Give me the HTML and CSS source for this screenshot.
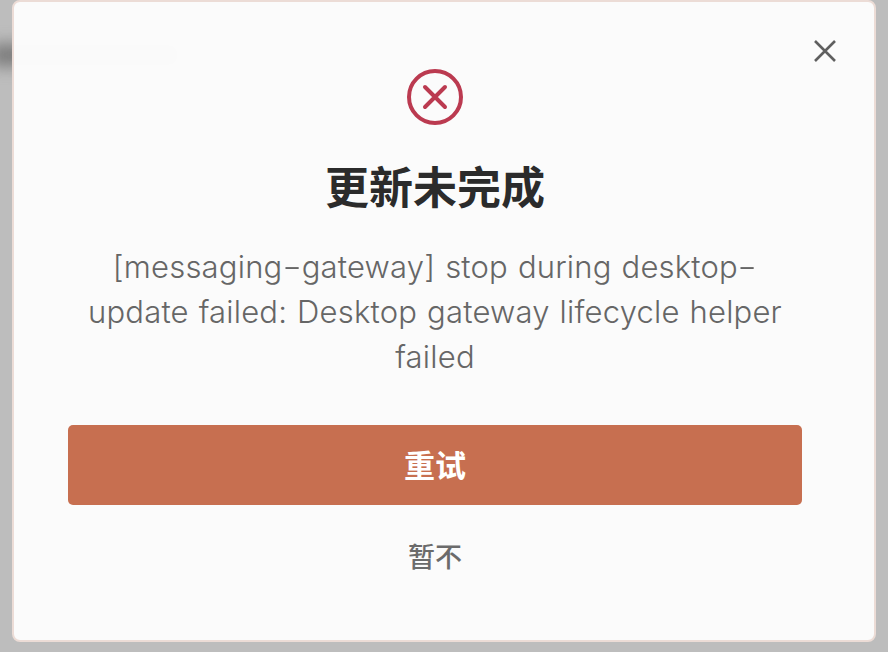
FILE: index.html
```html
<!DOCTYPE html>
<html lang="zh">
<head>
<meta charset="utf-8">
<title>更新未完成</title>
<link rel="stylesheet" href="styles.css">
</head>
<body>
<div class="backdrop">
  <div class="smudge"></div>
  <div class="dialog">
    <button class="close" aria-label="关闭">
      <svg viewBox="0 0 24 24" width="24" height="24"><path d="M2 2 22 22M22 2 2 22"/></svg>
    </button>
    <svg class="status" viewBox="0 0 56 56" width="56" height="56"><circle cx="28" cy="28" r="26"/><path d="M18 18 38 38M38 18 18 38"/></svg>
    <h1 class="title">更新未完成</h1>
    <p class="message">[messaging<span class="hy">-</span>gateway] stop during desktop<span class="hy">-</span>update failed: Desktop gateway lifecycle helper failed</p>
    <button class="retry">重试</button>
    <button class="later">暂不</button>
  </div>
</div>
</body>
</html>
```
FILE: styles.css
```css
* { box-sizing: border-box; }
html, body { margin: 0; height: 100%; }
body { font-family: "Inter", "Noto Sans CJK SC", sans-serif; overflow: hidden; }
.backdrop {
  position: relative;
  width: 888px;
  height: 652px;
  background: #bdbdbd;
  padding: 0 12px;
  overflow: hidden;
}
.smudge {
  position: absolute;
  left: -10px;
  top: 44px;
  width: 190px;
  height: 22px;
  background: #7a7a7a;
  filter: blur(8px);
}
.dialog {
  position: relative;
  width: 864px;
  height: 642px;
  padding: 67px 18px 0 0;
  display: flex;
  flex-direction: column;
  align-items: center;
  background: rgba(252, 252, 252, 0.985);
  border: 2px solid #ecdcd6;
  border-radius: 8px;
}
.close {
  position: absolute;
  top: 37px;
  right: 37px;
  width: 24px;
  height: 24px;
  padding: 0;
  border: 0;
  background: none;
  line-height: 0;
}
.close path { fill: none; stroke: #5f5f5f; stroke-width: 2.6; }
.status { display: block; }
.status circle, .status path { fill: none; stroke: #bb3a50; }
.status circle { stroke-width: 4; }
.status path { stroke-width: 4; stroke-linecap: round; }
.title {
  margin: 30px 0 0;
  font: 700 44px/60px "Noto Sans CJK SC", sans-serif;
  color: #2b2b2b;
}
.message {
  margin: 29px 0 0;
  width: 720px;
  font-size: 31px;
  line-height: 45px;
  font-weight: 300;
  letter-spacing: 0.2px;
  word-spacing: 1px;
  color: #666;
  text-align: center;
}
.hy {
  display: inline-block;
  margin: 0 2.5px;
  transform: scaleX(1.4);
}
.retry {
  margin-top: 46px;
  width: 734px;
  height: 80px;
  flex: none;
  padding: 0 0 4px;
  border: 0;
  border-radius: 5px;
  background: #c76f50;
  color: #fff;
  font: 700 31px/1 "Noto Sans CJK SC", sans-serif;
}
.later {
  margin-top: 27px;
  padding: 0;
  border: 0;
  background: none;
  color: #6b6b6b;
  font: 500 27px/48px "Noto Sans CJK SC", sans-serif;
}
```
